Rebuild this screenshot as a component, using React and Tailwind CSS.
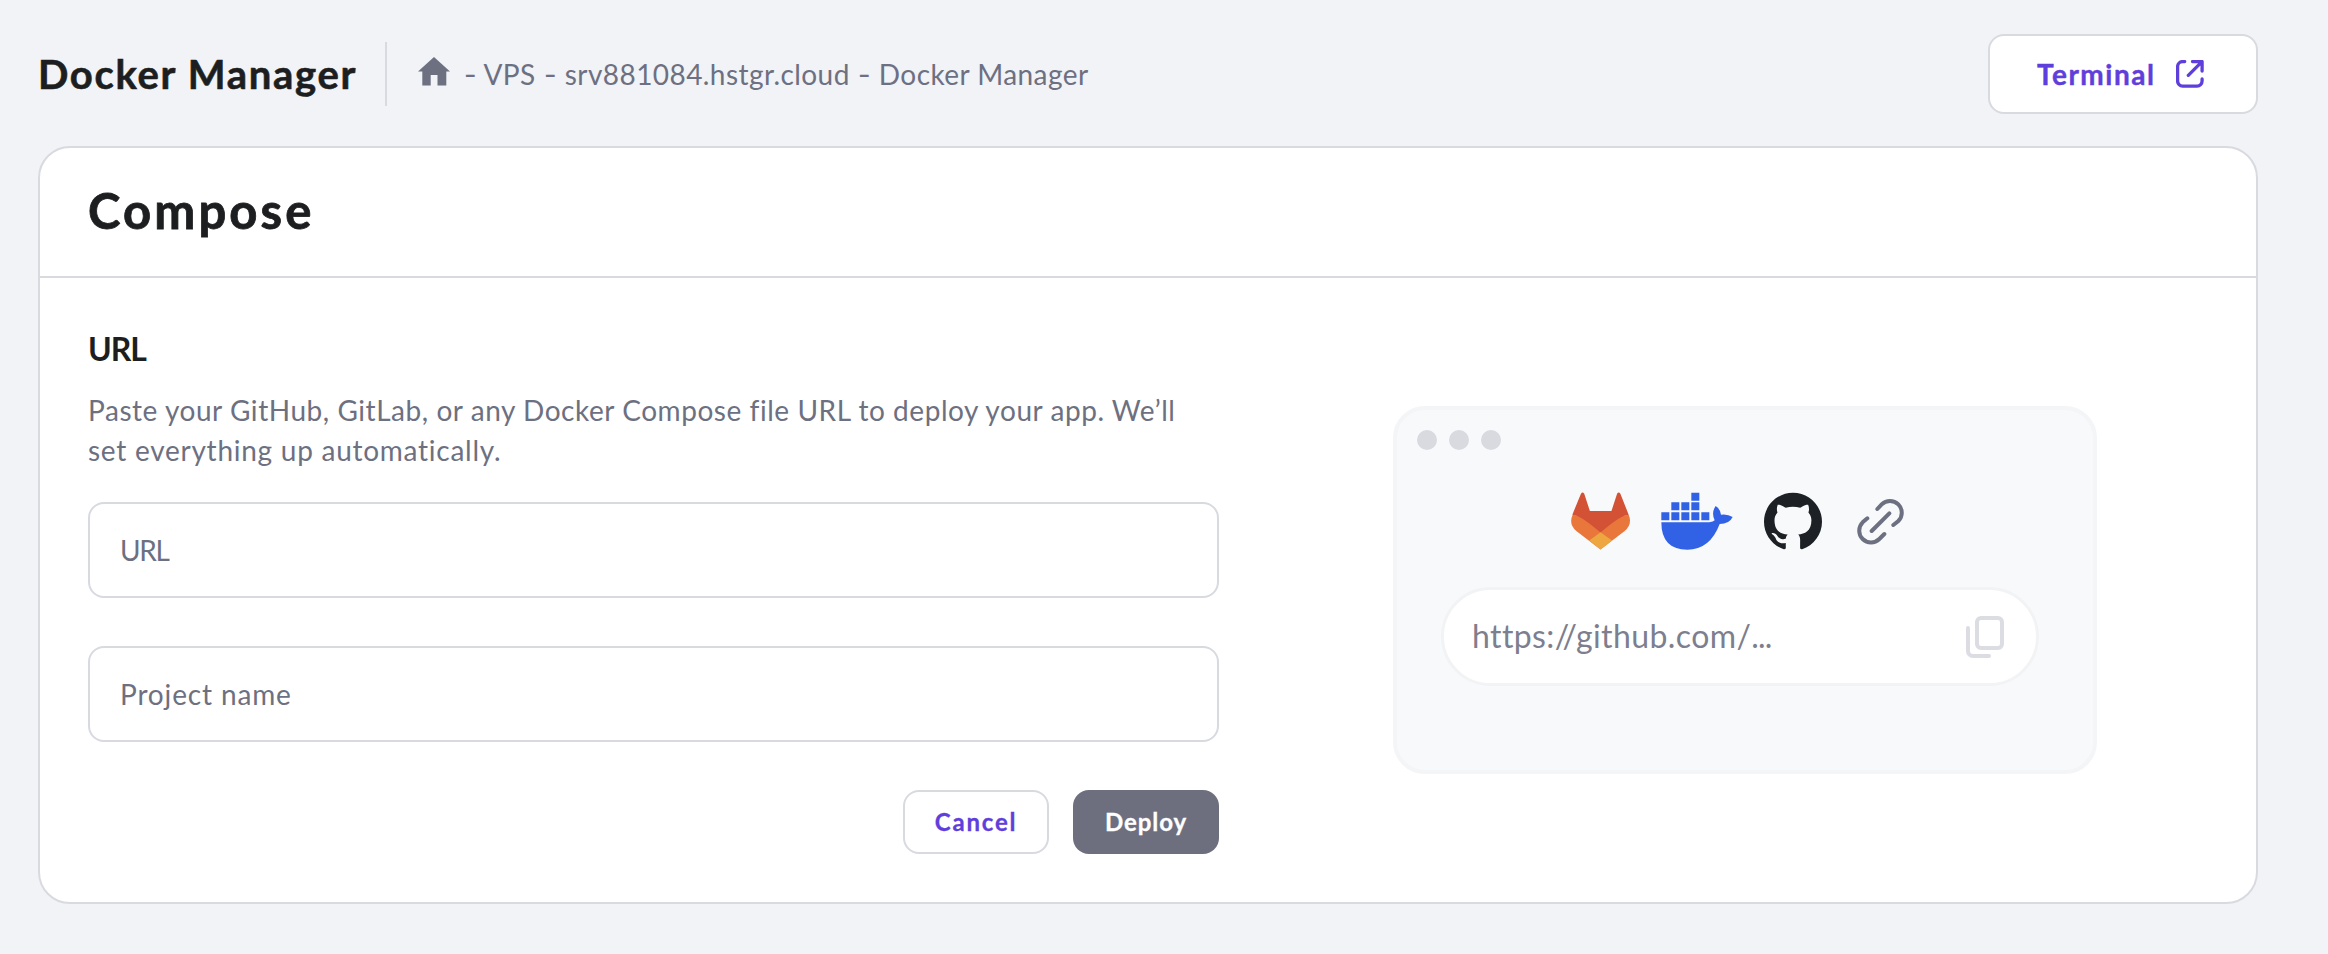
import { SiGithub } from "react-icons/si";

function HomeIcon() {
  return (
    <svg className="mb-[5px] h-[29px] w-8 shrink-0 fill-[#6d7081]" viewBox="0 0 32 29">
      <path d="M16 0 32 14.500H28.300V28.500H19.500V18H12.700V28.500H4.300V14.500H0Z" />
    </svg>
  );
}

function ExternalIcon() {
  return (
    <svg
      className="size-7 shrink-0 fill-none stroke-[#5f3fdc] stroke-[3.3px]"
      viewBox="0 0 28 28"
      strokeLinecap="round"
      strokeLinejoin="round"
    >
      <path d="M8.700 1.600H6.600a5 5 0 0 0-5 5v14.500a5 5 0 0 0 5 5h14.500a5 5 0 0 0 5-5V19M16.500 1.600H26.100V11M26 1.600 12.300 15.300" />
    </svg>
  );
}

function GitlabIcon() {
  return (
    <svg className="h-[58px] w-[59px] shrink-0" viewBox="62 66 178 174">
      <path
        className="fill-[#e9763b]"
        d="M67 134Q54 162 78 183L151 239 224 183Q248 162 236 134L151 150Z"
      />
      <path
        className="fill-[#d35235]"
        d="M92 71Q97 63 102 71L119 123H184L201 71Q206 63 211 71L236 134Q210 136 151 188 92 136 66 134Z"
      />
      <path className="fill-[#eda640]" d="M151 187 186 212 151 239 117 212Z" />
    </svg>
  );
}

function DockerIcon() {
  return (
    <svg
      className="h-[58px] w-[72px] shrink-0 fill-[#3162e5]"
      viewBox="333 66 216 174"
    >
      <path d="M424 68h24v24h-24zM364 97h24v24h-24zM394 97h24v24h-24zM424 97h24v24h-24zM334 127h24v24h-24zM364 127h24v24h-24zM394 127h24v24h-24zM424 127h24v24h-24zM454 127h24v24h-24z" />
      <path d="M334 157H478Q490 156 494 151 483 128 497 108 511 117 513 134 532 131 548 141 538 162 509 162 480 239 412 239 334 239 334 157Z" />
    </svg>
  );
}

function LinkIcon() {
  return (
    <svg
      className="h-[47px] w-[47px] shrink-0 fill-none stroke-[#6d7081] stroke-12"
      viewBox="921 82 141 141"
      strokeLinecap="round"
    >
      <path d="M965 181 1018 128M982 115 995 101A35 35 0 0 1 1045 151L1030 163M952 143 938 155A35 35 0 0 0 988 205L1003 190" />
    </svg>
  );
}

function CopyIcon() {
  return (
    <svg
      className="h-[42px] w-[38px] shrink-0 fill-none stroke-[#dcdde3] stroke-4"
      viewBox="0 0 38 42"
      strokeLinecap="round"
    >
      <rect x="11" y="2" width="25" height="30" rx="4" />
      <path d="M2 12V35a5 5 0 0 0 5 5H23" />
    </svg>
  );
}

function Dash() {
  return <span className="mx-[1.5px] inline-block scale-x-125">-</span>;
}

export default function App() {
  return (
    <div className="h-[954px] w-[2328px] bg-[#f1f3f7] pt-[34px] pl-[38px] font-[Lato,sans-serif] text-[#1d1e20]">
      <header className="flex h-20 w-[2220px] items-center">
        <h1 className="w-[347px] text-[40px] leading-[48px] font-bold tracking-[1.7px] whitespace-nowrap [-webkit-text-stroke:0.6px]">
          <span>Docker Manager</span>
        </h1>
        <div className="h-16 w-0.5 bg-[#d8dae0]" />
        <nav className="flex items-center pl-[31px] text-[28px] leading-10 tracking-[0.43px] whitespace-nowrap text-[#6d7081]">
          <HomeIcon />
          <span className="pl-[13px]">
            <Dash /> VPS <Dash /> srv881084.hstgr.cloud <Dash /> Docker Manager
          </span>
        </nav>
        <button className="ml-auto flex h-20 w-[270px] items-center rounded-2xl border-2 border-[#d8dae0] bg-white pl-[47px] text-[28px] font-bold tracking-[1.5px] text-[#5f3fdc] [-webkit-text-stroke:0.4px]">
          <span className="w-[139px] text-left">Terminal</span>
          <ExternalIcon />
        </button>
      </header>

      <section className="mt-8 flex h-[758px] w-[2220px] flex-col rounded-[32px] border-2 border-[#d8dae0] bg-white">
        <h2 className="flex h-[130px] items-center border-b-2 border-[#d8dae0] pb-[3px] pl-12 text-[49px] leading-none font-bold tracking-[3.1px] [-webkit-text-stroke:0.8px]">
          <span>Compose</span>
        </h2>
        <div className="flex flex-1 pl-12">
          <form className="w-[1131px] pt-[47px]">
            <h3 className="text-[32px] leading-[48px] font-bold tracking-[-1px]">
              <span>URL</span>
            </h3>
            <p className="pt-[17px] text-[28px] leading-10 whitespace-nowrap text-[#6d7081]">
              <span className="tracking-[0.55px]">
                Paste your GitHub, GitLab, or any Docker Compose file URL to deploy your app. We’ll
              </span>
              <br />
              <span className="tracking-[0.74px]">set everything up automatically.</span>
            </p>
            <div className="mt-8 flex h-24 items-center rounded-2xl border-2 border-[#d8dae0] pl-[30px] text-[28px] tracking-[-1.3px] text-[#6d7081]">
              <span>URL</span>
            </div>
            <div className="mt-12 flex h-24 items-center rounded-2xl border-2 border-[#d8dae0] pl-[30px] text-[28px] tracking-[0.85px] text-[#6d7081]">
              <span>Project name</span>
            </div>
            <div className="mt-12 flex justify-end gap-6 text-2xl font-bold [-webkit-text-stroke:0.3px]">
              <button
                type="button"
                className="flex h-16 w-[146px] items-center justify-center rounded-2xl border-2 border-[#d8dae0] tracking-[1.8px] text-[#5f3fdc]"
              >
                <span>Cancel</span>
              </button>
              <button
                type="button"
                className="flex h-16 w-[146px] items-center justify-center rounded-2xl bg-[#6d6f7f] tracking-[0.9px] text-white"
              >
                <span>Deploy</span>
              </button>
            </div>
          </form>

          <div className="mt-32 ml-[174px] h-[368px] w-[704px] rounded-[32px] border-4 border-[#f3f5f7] bg-[#f8f9fb] pt-5">
            <div className="flex gap-3 pl-5">
              <i className="size-5 rounded-full bg-[#d8dae0]" />
              <i className="size-5 rounded-full bg-[#d8dae0]" />
              <i className="size-5 rounded-full bg-[#d8dae0]" />
            </div>
            <div className="mt-[42px] flex h-[58px] items-center pl-[174px]">
              <GitlabIcon />
              <div className="pl-[31px]">
                <DockerIcon />
              </div>
              <div className="pl-[31px]">
                <SiGithub className="size-[58px] text-[#1d2024]" />
              </div>
              <div className="pl-[35px]">
                <LinkIcon />
              </div>
            </div>
            <div className="mt-[37px] ml-11 flex h-[99px] w-[598px] items-center rounded-full border-3 border-[#f2f3f5] bg-white pr-[32px] pl-7 text-[32px] text-[#7d7f8e]">
              <span className="pb-0.5 tracking-[0.4px]">
                https://github.com/<span className="tracking-[-0.8px]">...</span>
              </span>
              <div className="ml-auto">
                <CopyIcon />
              </div>
            </div>
          </div>
        </div>
      </section>
    </div>
  );
}
